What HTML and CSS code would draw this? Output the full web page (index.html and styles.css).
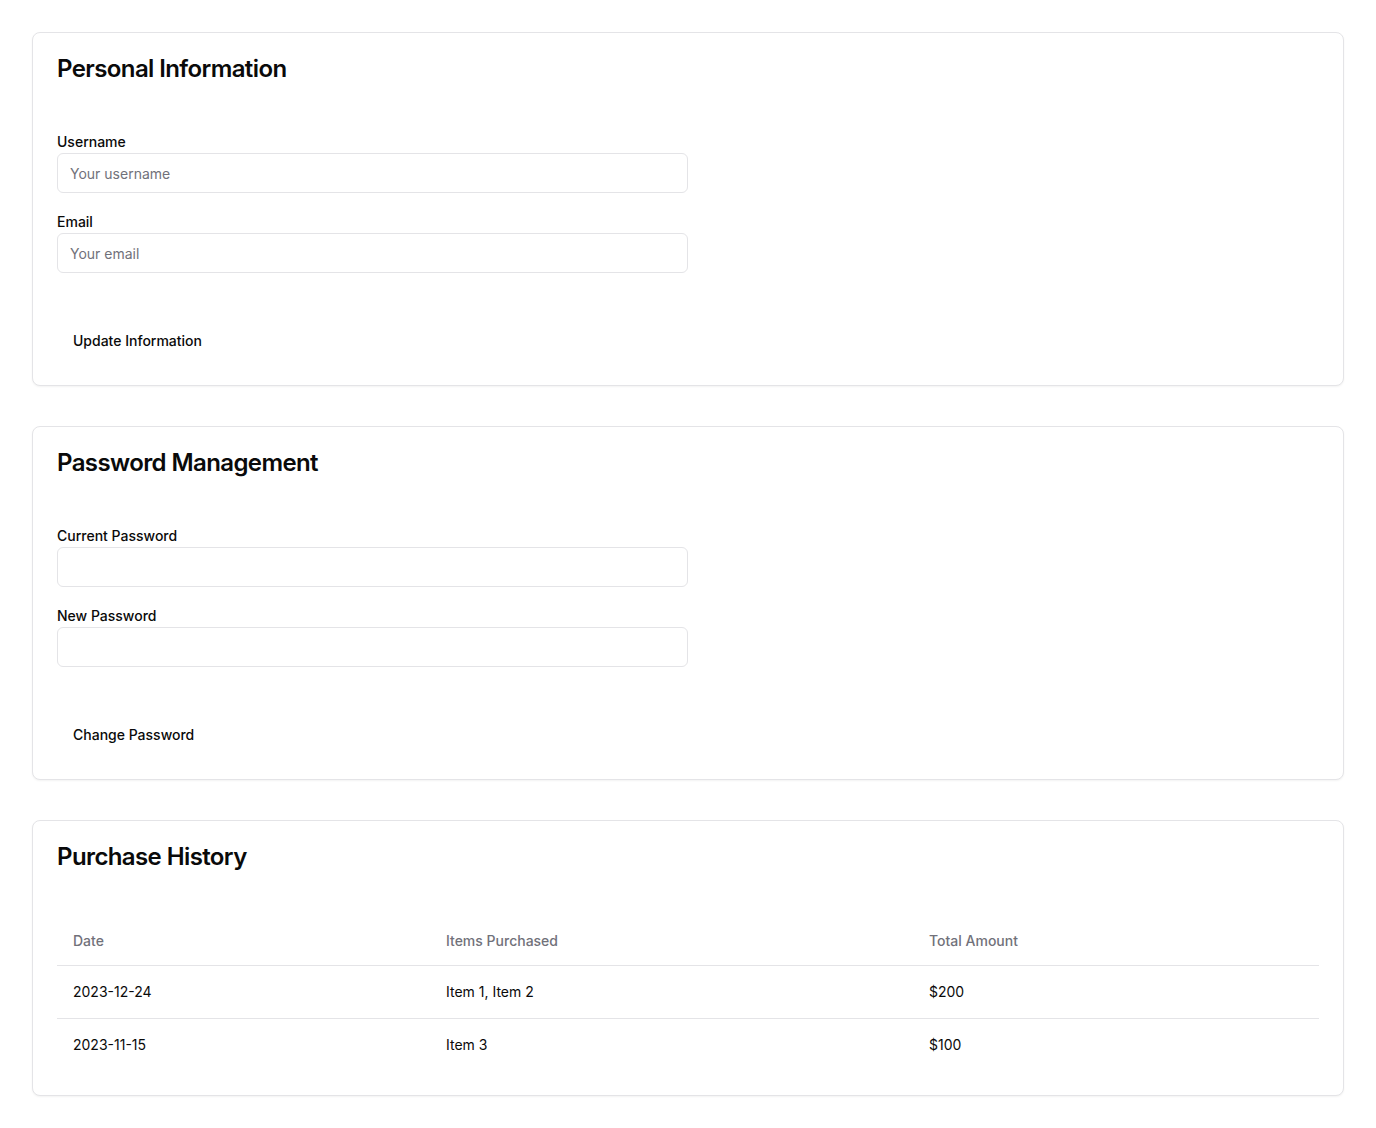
FILE: index.html
```html
<!DOCTYPE html>
<html lang="en">
<head>
<meta charset="utf-8">
<title>Account</title>
<link rel="stylesheet" href="styles.css">
</head>
<body>
<main class="page">
  <section class="card">
    <header class="card-header"><h2 class="card-title">Personal Information</h2></header>
    <div class="card-content">
      <div class="field">
        <label class="label" for="username">Username</label>
        <input class="input" id="username" type="text" placeholder="Your username">
      </div>
      <div class="field">
        <label class="label" for="email">Email</label>
        <input class="input" id="email" type="email" placeholder="Your email">
      </div>
    </div>
    <div class="card-footer"><button class="btn-ghost" type="button">Update Information</button></div>
  </section>

  <section class="card">
    <header class="card-header"><h2 class="card-title">Password Management</h2></header>
    <div class="card-content">
      <div class="field">
        <label class="label" for="current">Current Password</label>
        <input class="input" id="current" type="password">
      </div>
      <div class="field">
        <label class="label" for="new">New Password</label>
        <input class="input" id="new" type="password">
      </div>
    </div>
    <div class="card-footer"><button class="btn-ghost" type="button">Change Password</button></div>
  </section>

  <section class="card">
    <header class="card-header"><h2 class="card-title">Purchase History</h2></header>
    <div class="card-content table-content">
      <table class="table">
        <colgroup><col class="c1"><col class="c2"><col class="c3"></colgroup>
        <thead>
          <tr><th>Date</th><th>Items Purchased</th><th>Total Amount</th></tr>
        </thead>
        <tbody>
          <tr><td>2023-12-24</td><td>Item 1, Item 2</td><td>$200</td></tr>
          <tr><td>2023-11-15</td><td>Item 3</td><td>$100</td></tr>
        </tbody>
      </table>
    </div>
  </section>
</main>
</body>
</html>
```

FILE: styles.css
```css
* { box-sizing: border-box; }
html, body { margin: 0; padding: 0; background: #ffffff; }
body {
  font-family: Inter, "Noto Sans", "Liberation Sans", sans-serif;
  color: #0a0a0a;
  font-size: 16px;
  line-height: 1.5;
}
.page {
  padding: 32px;
  display: flex;
  flex-direction: column;
  gap: 40px;
}
.card {
  border: 1px solid #e4e4e7;
  border-radius: 8px;
  background: #fff;
  box-shadow: 0 1px 2px 0 rgba(0,0,0,0.05);
}
.card-header { padding: 24px; }
.card-title {
  margin: 0;
  font-size: 24px;
  line-height: 24px;
  font-weight: 600;
  letter-spacing: -0.025em;
}
.card-content {
  padding: 30px 24px 0 24px;
  display: flex;
  flex-direction: column;
  gap: 22px;
}
.field { display: flex; flex-direction: column; gap: 4px; }
.label {
  display: block;
  font-size: 14px;
  line-height: 14px;
  font-weight: 500;
}
.input {
  width: 50%;
  height: 40px;
  border: 1px solid #e4e4e7;
  border-radius: 6px;
  padding: 8px 12px;
  font-family: inherit;
  font-size: 14px;
  color: #0a0a0a;
  background: #fff;
  outline: none;
}
.input::placeholder { color: #71717a; }
.card-footer { padding: 48px 24px 24px 24px; display: flex; }
.btn-ghost {
  height: 40px;
  padding: 8px 16px;
  border: 0;
  background: transparent;
  border-radius: 6px;
  font-family: inherit;
  font-size: 14px;
  line-height: 20px;
  font-weight: 500;
  color: #0a0a0a;
}
.table-content { padding: 24px 24px 24px 24px; display: block; }
.table {
  width: 100%;
  border-collapse: collapse;
  table-layout: fixed;
  font-size: 14px;
  line-height: 20px;
}
.c1 { width: 373px; }
.c2 { width: 483px; }
.c3 { width: auto; }
.table th {
  height: 48px;
  padding: 0 16px;
  text-align: left;
  vertical-align: middle;
  font-weight: 500;
  color: #71717a;
}
.table thead tr { border-bottom: 1px solid #e4e4e7; }
.table tbody tr { border-bottom: 1px solid #e4e4e7; }
.table tbody tr:last-child { border-bottom: 0; }
.table td { padding: 16px; vertical-align: middle; }
```
